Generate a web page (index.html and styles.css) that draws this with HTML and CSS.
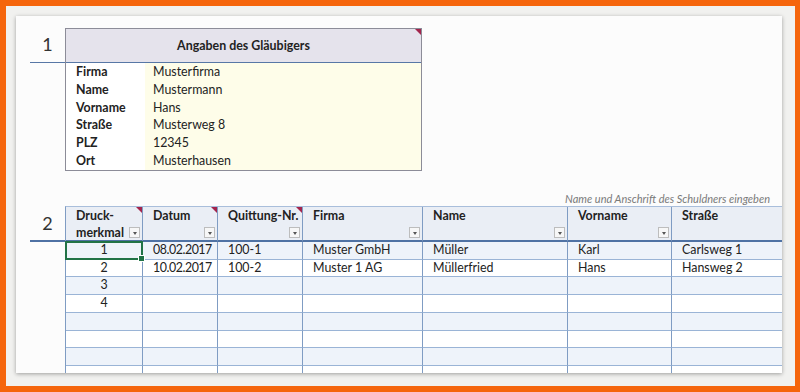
FILE: index.html
```html
<!DOCTYPE html>
<html lang="de">
<head>
<meta charset="utf-8">
<title>Quittung</title>
<link rel="stylesheet" href="styles.css">
</head>
<body>
<div class="frame">
  <div class="card">
    <div class="sec1">
      <div class="num n1">1</div>
      <div class="box">
        <div class="box-head">Angaben des Gläubigers<span class="tri"></span></div>
        <div class="kv"><div class="k">Firma</div><div class="v">Musterfirma</div></div>
        <div class="kv"><div class="k">Name</div><div class="v">Mustermann</div></div>
        <div class="kv"><div class="k">Vorname</div><div class="v">Hans</div></div>
        <div class="kv"><div class="k">Straße</div><div class="v">Musterweg 8</div></div>
        <div class="kv"><div class="k">PLZ</div><div class="v">12345</div></div>
        <div class="kv"><div class="k">Ort</div><div class="v">Musterhausen</div></div>
      </div>
    </div>
    <div class="note">Name und Anschrift des Schuldners eingeben</div>
    <div class="sec2">
      <div class="num n2">2</div>
      <div class="tbl">
        <div class="th">Druck-<br>merkmal<span class="tri"></span><span class="dd"></span></div>
        <div class="th">Datum<span class="tri"></span><span class="dd"></span></div>
        <div class="th">Quittung-Nr.<span class="tri"></span><span class="dd"></span></div>
        <div class="th">Firma<span class="dd"></span></div>
        <div class="th">Name<span class="dd"></span></div>
        <div class="th">Vorname<span class="dd"></span></div>
        <div class="th">Straße</div>

        <div class="td c sel b">1</div><div class="td date b">08.02.2017</div><div class="td b">100-1</div><div class="td b">Muster GmbH</div><div class="td b">Müller</div><div class="td b">Karl</div><div class="td b">Carlsweg 1</div>
        <div class="td c">2</div><div class="td date">10.02.2017</div><div class="td">100-2</div><div class="td">Muster 1 AG</div><div class="td">Müllerfried</div><div class="td">Hans</div><div class="td">Hansweg 2</div>
        <div class="td c b">3</div><div class="td b"></div><div class="td b"></div><div class="td b"></div><div class="td b"></div><div class="td b"></div><div class="td b"></div>
        <div class="td c">4</div><div class="td"></div><div class="td"></div><div class="td"></div><div class="td"></div><div class="td"></div><div class="td"></div>
        <div class="td b"></div><div class="td b"></div><div class="td b"></div><div class="td b"></div><div class="td b"></div><div class="td b"></div><div class="td b"></div>
        <div class="td"></div><div class="td"></div><div class="td"></div><div class="td"></div><div class="td"></div><div class="td"></div><div class="td"></div>
        <div class="td b"></div><div class="td b"></div><div class="td b"></div><div class="td b"></div><div class="td b"></div><div class="td b"></div><div class="td b"></div>
        <div class="td"></div><div class="td"></div><div class="td"></div><div class="td"></div><div class="td"></div><div class="td"></div><div class="td"></div>
      </div>
    </div>
  </div>
</div>
</body>
</html>
```
FILE: styles.css
```css
* { box-sizing: border-box; }
html, body { margin: 0; padding: 0; }
body {
  font-family: Lato, "Open Sans", "DejaVu Sans", sans-serif;
  font-size: 12.4px;
  color: #222;
}
.frame {
  width: 800px;
  height: 392px;
  border: 6px solid #f5650c;
  border-right-width: 5px;
  background: #f1f1ef;
  padding: 10px 13px 13px 10px;
}
.card {
  width: 766px;
  height: 357px;
  background: #fcfcfc;
  box-shadow: 0 1px 4px rgba(0,0,0,0.35);
  padding: 12px 0 0 14px;
  overflow: hidden;
}
.sec1, .sec2 { display: flex; align-items: flex-start; }
.num {
  flex: 0 0 35px;
  width: 35px;
  text-align: center;
  font-size: 18px;
  font-weight: 400;
  color: #333;
  border-bottom: 1px solid #5777a6;
}
.n1 { height: 35px; padding-top: 5px; }
.n2 { height: 36px; padding-top: 6px; border-bottom: 2px solid #4f72a4; }
.box {
  width: 357px;
  border: 1px solid #8c8c98;
  background: #fff;
}
.box-head {
  position: relative;
  height: 34px;
  background: #e5e3ec;
  border-bottom: 1px solid #5777a6;
  text-align: center;
  font-weight: 700;
  line-height: 33px;
}
.kv { display: flex; height: 17.8px; line-height: 17.8px; }
.k { width: 79px; padding-left: 10px; font-weight: 700; }
.v { flex: 1; padding-left: 8px; background: #fefde9; }
.tri {
  position: absolute;
  top: 0;
  right: 0;
  width: 0;
  height: 0;
  border-top: 6px solid #a3244c;
  border-left: 6px solid transparent;
}
.note {
  height: 14px;
  margin-top: 21px;
  padding-right: 12px;
  text-align: right;
  font-style: italic;
  font-size: 11px;
  line-height: 14px;
  color: #7a7a7a;
}
.tbl {
  flex: 0 0 auto;
  display: grid;
  grid-template-columns: 77px 75px 85px 120px 145px 104px 160px;
  grid-auto-rows: 17.75px;
  grid-template-rows: 35px;
  border-top: 1px solid #a9bedb;
  border-left: 1px solid #7f9cc3;
}
.th {
  position: relative;
  background: #eaeef5;
  border-right: 1px solid #7f9cc3;
  border-bottom: 2px solid #4f72a4;
  padding-left: 10px;
  font-weight: 700;
  line-height: 17px;
}
.dd {
  position: absolute;
  right: 2px;
  bottom: 2px;
  width: 11px;
  height: 11px;
  background: #f7f7f7;
  border: 1px solid #bdbdbd;
}
.dd::after {
  content: "";
  position: absolute;
  left: 3px;
  top: 4px;
  border-top: 3px solid #555;
  border-left: 2px solid transparent;
  border-right: 2px solid transparent;
}
.td {
  position: relative;
  border-right: 1px solid #7f9cc3;
  border-bottom: 1px solid #9ab4d6;
  padding-left: 10px;
  line-height: 16.75px;
  white-space: nowrap;
  background: #fff;
}
.td.b { background: #eef3fa; }
.td.c { text-align: center; padding-left: 0; }
.td.date { letter-spacing: -0.45px; }
.sel::after {
  content: "";
  position: absolute;
  left: -1px;
  top: -1px;
  right: -1px;
  bottom: -1px;
  border: 2px solid #217346;
}
.sel::before {
  content: "";
  position: absolute;
  right: -3px;
  bottom: -3px;
  width: 5px;
  height: 5px;
  background: #217346;
  border: 1px solid #fff;
  z-index: 2;
}
```
